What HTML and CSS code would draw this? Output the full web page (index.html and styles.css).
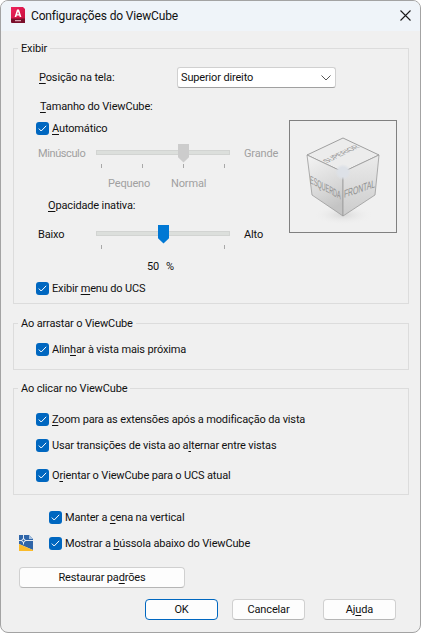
FILE: index.html
```html
<!DOCTYPE html>
<html lang="pt">
<head>
<meta charset="utf-8">
<title>Configurações do ViewCube</title>
<link rel="stylesheet" href="styles.css">
</head>
<body>
<div class="window">
  <header class="titlebar">
    <svg class="app-icon" width="16" height="17" viewBox="0 0 16 17"><defs><linearGradient id="ared" x1="0" y1="0" x2="1" y2="1"><stop offset="0" stop-color="#f0245c"/><stop offset="1" stop-color="#c80f3f"/></linearGradient></defs><path d="M1 0H13L15 2V12H1Z" fill="url(#ared)"/><path d="M1 11.500H15V16H2Q1 16 1 15Z" fill="#7a0f2b"/><path d="M4.600 10 7 2.500h2L11.400 10H9.700l-.4-1.400H6.700L6.300 10ZM7.100 7.300H8.900L8 4.400Z" fill="#fff"/><path d="M5 13h6v1.300H5Z" fill="#dba0ae"/></svg>
    <span class="title">Configurações do ViewCube</span>
    <svg class="close" width="11" height="11" viewBox="0 0 11 11"><path d="M.5.5l10 10M10.500.5l-10 10" stroke="#1a1a1a" stroke-width="1.100" fill="none"/></svg>
  </header>
  <main class="content">
    <fieldset class="group group-display">
      <legend>Exibir</legend>
      <div class="row-position">
        <label class="pos-label"><u>P</u>osição na tela:</label>
        <div class="select"><span>Superior direito</span>
          <svg width="10" height="6" viewBox="0 0 10 6"><path d="M.5.5 5 5 9.500.5" stroke="#555" fill="none"/></svg>
        </div>
      </div>
      <div class="size-area">
        <div class="size-left">
          <div class="size-title"><u>T</u>amanho do ViewCube:</div>
          <div class="check auto"><span class="box"><svg width="9" height="7" viewBox="0 0 9 7"><path d="M.8 3.600 3.200 6 8.200.8" stroke="#fff" stroke-width="1" fill="none"/></svg></span><span class="check-text"><u>A</u>utomático</span></div>
          <div class="slider disabled slider-size">
            <span class="s-left">Minúsculo</span>
            <div class="track"><span class="thumb t-size"></span></div>
            <span class="s-right">Grande</span>
          </div>
          <div class="ticks four"><i></i><i></i><i></i><i></i></div>
          <div class="size-names"><span>Pequeno</span><span>Normal</span></div>
          <div class="opacity-title"><u>O</u>pacidade inativa:</div>
          <div class="slider slider-opacity">
            <span class="s-left">Baixo</span>
            <div class="track"><span class="thumb t-opacity"></span></div>
            <span class="s-right">Alto</span>
          </div>
          <div class="ticks two"><i></i><i></i></div>
          <div class="percent"><span>50</span><span>%</span></div>
        </div>
        <div class="preview">
          <svg width="106" height="111" viewBox="0 0 106 111">
            <defs>
              <linearGradient id="fl" x1="0" y1="0" x2="0.3" y2="1"><stop offset="0" stop-color="#f4f4f4"/><stop offset=".7" stop-color="#d6d6d6"/><stop offset="1" stop-color="#c4c4c4"/></linearGradient>
              <linearGradient id="fr" x1="0" y1="0" x2="0" y2="1"><stop offset="0" stop-color="#ebebeb"/><stop offset="1" stop-color="#cccccc"/></linearGradient>
              <radialGradient id="hub"><stop offset="0" stop-color="#dde1e7"/><stop offset=".6" stop-color="#dde1e7"/><stop offset="1" stop-color="#dde1e7" stop-opacity="0"/></radialGradient>
              <radialGradient id="shade"><stop offset="0" stop-color="#d8d8d8"/><stop offset="1" stop-color="#f0f0f0" stop-opacity="0"/></radialGradient>
            </defs>
            <ellipse cx="53" cy="94" rx="30" ry="10" fill="url(#shade)"/>
            <path d="M53 17 89 34 53 51 17 34Z" fill="#ececec" stroke="#8a8a8a" stroke-width=".8"/>
            <path d="M17 34 53 51V95L22 74Z" fill="url(#fl)" stroke="#9a9a9a" stroke-width=".8"/>
            <path d="M89 34 53 51V95L85 74Z" fill="url(#fr)" stroke="#9a9a9a" stroke-width=".8"/>
            <circle cx="53" cy="51" r="8" fill="url(#hub)"/>
            <text class="cube-text" transform="matrix(.65 -.31 .75 .36 37 42)" font-size="10">SUPERIOR</text>
            <text class="cube-text" transform="matrix(.56 .3 0 1.100 20 62)" font-size="10">ESQUERDA</text>
            <text class="cube-text" transform="matrix(.69 -.24 0 1.100 54 77)" font-size="10">FRONTAL</text>
          </svg>
        </div>
      </div>
      <div class="check ucs"><span class="box"><svg width="9" height="7" viewBox="0 0 9 7"><path d="M.8 3.600 3.200 6 8.200.8" stroke="#fff" stroke-width="1" fill="none"/></svg></span><span class="check-text">Exibir <u>m</u>enu do UCS</span></div>
    </fieldset>

    <fieldset class="group group-drag">
      <legend>Ao arrastar o ViewCube</legend>
      <div class="check"><span class="box"><svg width="9" height="7" viewBox="0 0 9 7"><path d="M.8 3.600 3.200 6 8.200.8" stroke="#fff" stroke-width="1" fill="none"/></svg></span><span class="check-text">Alin<u>h</u>ar à vista mais próxima</span></div>
    </fieldset>

    <fieldset class="group group-click">
      <legend>Ao clicar no ViewCube</legend>
      <div class="check"><span class="box"><svg width="9" height="7" viewBox="0 0 9 7"><path d="M.8 3.600 3.200 6 8.200.8" stroke="#fff" stroke-width="1" fill="none"/></svg></span><span class="check-text"><u>Z</u>oom para as extensões após a modificação da vista</span></div>
      <div class="check c2"><span class="box"><svg width="9" height="7" viewBox="0 0 9 7"><path d="M.8 3.600 3.200 6 8.200.8" stroke="#fff" stroke-width="1" fill="none"/></svg></span><span class="check-text">Usar transições de vista ao a<u>l</u>ternar entre vistas</span></div>
      <div class="check c3"><span class="box"><svg width="9" height="7" viewBox="0 0 9 7"><path d="M.8 3.600 3.200 6 8.200.8" stroke="#fff" stroke-width="1" fill="none"/></svg></span><span class="check-text">O<u>r</u>ientar o ViewCube para o UCS atual</span></div>
    </fieldset>

    <div class="extras">
      <div class="check"><span class="box"><svg width="9" height="7" viewBox="0 0 9 7"><path d="M.8 3.600 3.200 6 8.200.8" stroke="#fff" stroke-width="1" fill="none"/></svg></span><span class="check-text">Manter a <u>c</u>ena na vertical</span></div>
      <div class="compass-row">
        <svg class="compass" width="15" height="16" viewBox="0 0 15 16"><path d="M0 0H10L14 4V15L0 9Z" fill="#2f65a8"/><path d="M10 0 14 4H10Z" fill="#a9c3e0"/><path d="M0 9 14 15V16H0Z" fill="#fbbb2a"/><path d="M4.500 0V9.500M0 5.500H14" stroke="#dfe8f2" stroke-width="1"/><circle cx="4.500" cy="5.500" r="1.600" fill="#2f65a8" stroke="#fff"/></svg>
        <div class="check"><span class="box"><svg width="9" height="7" viewBox="0 0 9 7"><path d="M.8 3.600 3.200 6 8.200.8" stroke="#fff" stroke-width="1" fill="none"/></svg></span><span class="check-text">Mostrar a <u>b</u>ússola abaixo do ViewCube</span></div>
      </div>
    </div>
    <button class="btn restore">Restaurar pa<u>d</u>rões</button>
    <div class="actions">
      <button class="btn primary">OK</button>
      <button class="btn">Cancelar</button>
      <button class="btn help">Aj<u>u</u>da</button>
    </div>
  </main>
</div>
</body>
</html>
```
FILE: styles.css
```css
* { box-sizing: border-box; }
html, body { margin: 0; padding: 0; background: #fff; }
body { width: 421px; height: 633px; overflow: hidden; font-family: Roboto, "Noto Sans", sans-serif; font-size: 11px; letter-spacing: -0.15px; color: #111; }
u { text-underline-offset: 2px; text-decoration-thickness: 1px; }
.window { width: 421px; height: 633px; background: #f0f0f0; border: 1px solid #a3a3a3; border-radius: 8px; overflow: hidden; display: flex; flex-direction: column; }
.titlebar { height: 30px; flex: none; display: flex; align-items: center; background: #eff4f9; padding: 0 9px 0 9px; }
.app-icon { margin-right: 5px; margin-top: -1px; }
.title { flex: 1; font-size: 12px; }
.close { margin-top: -2px; }
.content { padding: 10px 11px 0 12px; display: flex; flex-direction: column; }
.group { border: 1px solid #dcdcdc; margin: 0; padding: 0 0 0 22px; min-width: 0; }
.group legend { margin-left: -18px; padding: 0 3px; height: 14px; line-height: 16px; }
.group-display { height: 263px; padding-top: 11px; padding-right: 11px; }
.row-position { display: flex; align-items: center; height: 21px; margin-top: 1px; }
.pos-label { width: 141px; padding-left: 3px; }
.select { width: 159px; height: 21px; background: #fff; border: 1px solid #d0d0d0; border-bottom-color: #a0a0a0; border-radius: 3px; display: flex; align-items: center; justify-content: space-between; padding: 0 4px 0 3px; }
.size-area { display: flex; align-items: flex-start; }
.size-left { width: 253px; flex: none; }
.size-title { margin: 11px 0 0 4px; line-height: 15px; height: 14px; }
.check { display: flex; align-items: center; gap: 3px; height: 14px; line-height: 14px; white-space: nowrap; }
.check-text { padding-top: 2px; }
.box { width: 13px; height: 13px; border-radius: 3px; background: #0067c0; display: flex; align-items: center; justify-content: center; flex: none; }
.auto { margin-top: 8px; }
.slider { display: flex; align-items: center; height: 20px; margin-left: 2px; }
.slider-size { margin-top: 7px; }
.slider-size .s-left { letter-spacing: -0.4px; }
.slider-opacity { margin-top: 10px; }
.s-left { width: 58px; flex: none; padding-top: 2px; }
.s-right { margin-left: 14px; padding-top: 2px; }
.track { width: 134px; height: 5px; background: #dcdfdc; border: 1px solid #d2d4d2; position: relative; }
.disabled { color: #a0a0a0; }
.thumb { position: absolute; top: -7px; width: 11px; height: 19px; clip-path: polygon(0 0, 100% 0, 100% 72%, 50% 100%, 0 72%); }
.t-size { left: 81px; background: #cccccc; }
.t-opacity { left: 61px; background: #0078d4; }
.ticks { height: 4px; margin: 2px 0 0 65px; width: 124px; display: flex; justify-content: space-between; }
.ticks i { width: 1px; height: 4px; background: #a8a8a8; }
.size-names { display: grid; grid-template-columns: 63px auto; color: #a0a0a0; margin: 8px 0 0 72px; line-height: 15px; }
.opacity-title { margin: 7px 0 0 12px; line-height: 15px; }
.percent { display: grid; grid-template-columns: 19px auto; margin: 10px 0 0 111px; line-height: 15px; }
.preview { width: 108px; height: 113px; border: 1px solid #808080; margin-top: 32px; }
.preview svg { display: block; }
.cube-text { font-family: "Liberation Sans", sans-serif; fill: #8f8f8f; }
.ucs { margin-top: 7px; }
.group-drag { height: 54px; margin-top: 12px; padding-top: 12px; }
.group-click { height: 114px; margin-top: 11px; padding-top: 17px; }
.c2 { margin-top: 12px; }
.c3 { margin-top: 16px; }
.extras { margin-top: 15px; padding-left: 6px; }
.extras > .check { margin-left: 30px; }
.compass-row { display: flex; align-items: center; margin-top: 11px; }
.compass { margin-right: 15px; }
.btn { font: inherit; letter-spacing: inherit; color: #111; background: #fdfdfd; border: 1px solid #d0d0d0; border-bottom-color: #b5b5b5; border-radius: 4px; height: 21px; padding: 0; }
.restore { width: 166px; margin: 16px 0 0 6px; }
.actions { display: flex; justify-content: flex-end; gap: 14px; margin: 11px 13px 0 0; }
.actions .btn { width: 73px; }
.actions .help { margin-left: 4px; }
.actions .primary { border: 1px solid #0067c0; }
```
